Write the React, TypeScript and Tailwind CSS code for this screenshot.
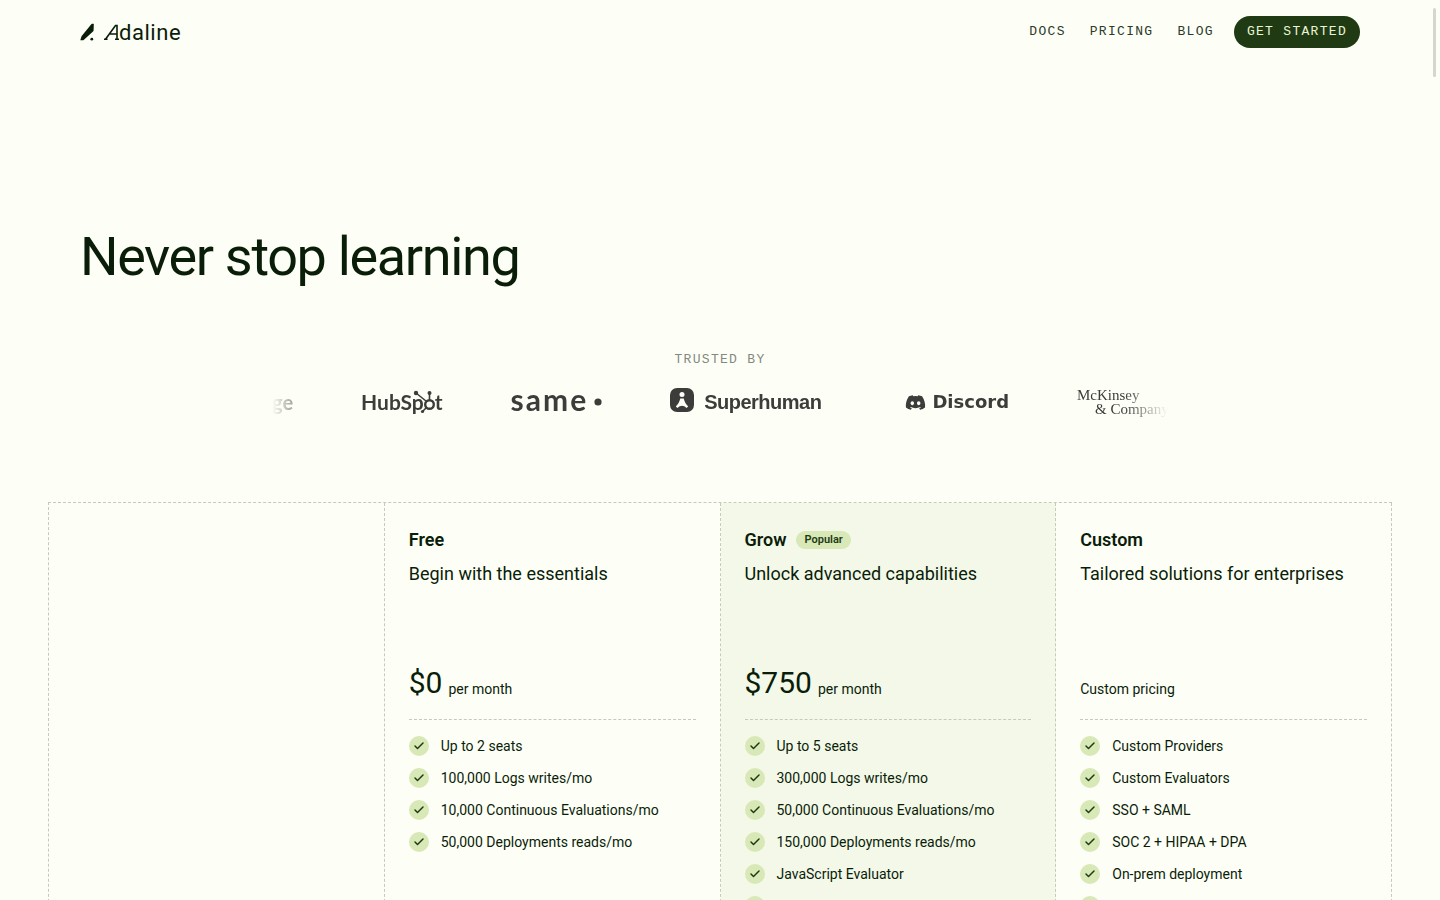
import type { ReactNode } from 'react';
import { Check } from 'lucide-react';
import { FaDiscord } from 'react-icons/fa';

interface Plan {
  name: string;
  tagline: string;
  price?: string;
  priceNote: string;
  popular?: boolean;
  features: string[];
}

const navLinks = ['Docs', 'Pricing', 'Blog'];

const plans: Plan[] = [
  {
    name: 'Free',
    tagline: 'Begin with the essentials',
    price: '$0',
    priceNote: 'per month',
    features: [
      'Up to 2 seats',
      '100,000 Logs writes/mo',
      '10,000 Continuous Evaluations/mo',
      '50,000 Deployments reads/mo',
    ],
  },
  {
    name: 'Grow',
    tagline: 'Unlock advanced capabilities',
    price: '$750',
    priceNote: 'per month',
    popular: true,
    features: [
      'Up to 5 seats',
      '300,000 Logs writes/mo',
      '50,000 Continuous Evaluations/mo',
      '150,000 Deployments reads/mo',
      'JavaScript Evaluator',
      'Slack support',
    ],
  },
  {
    name: 'Custom',
    tagline: 'Tailored solutions for enterprises',
    priceNote: 'Custom pricing',
    features: [
      'Custom Providers',
      'Custom Evaluators',
      'SSO + SAML',
      'SOC 2 + HIPAA + DPA',
      'On-prem deployment',
      'Tailored onboarding',
    ],
  },
];

function AdalineLogo() {
  return (
    <a href="#" className="flex items-center gap-2 text-[#0a1d08]">
      <svg width="16" height="18" viewBox="0 0 16 18" fill="currentColor" aria-hidden="true">
        <path d="M12 .8H13.400Q13.900.8 13.800 1.500L13.600 7.200Q13.600 8 13 8.600L3.400 17.300H.3L1.200 14.200Q1.600 12.900 2.500 11.900L11.300 1.300Q11.600.8 12 .8Z" />
        <circle cx="11.800" cy="16.200" r="1.400" />
      </svg>
      <span className="flex items-center font-['Roboto'] text-[22px] tracking-wide">
        <svg width="15" height="16" viewBox="0 0 15 16" fill="none" stroke="currentColor" strokeWidth="1.600" aria-hidden="true">
          <path d="M0 15.200H3.500M1.500 15.200L11.500 1.500H13V15.200M5.500 10H13M11 15.200H15" />
        </svg>
        daline
      </span>
    </a>
  );
}

function HubSpotLogo() {
  return (
    <span className="flex items-center font-['Lato'] text-[21px] font-bold">
      HubSp
      <svg width="15" height="27" viewBox="0 0 15 27" className="-ml-1 overflow-visible" fill="none" stroke="currentColor" aria-hidden="true">
        <circle cx="9.500" cy="15.500" r="4.300" strokeWidth="2.400" />
        <path d="M9.500 11V5M6 12L-4 4M6.500 18.500L2.500 22.500" strokeWidth="1.600" />
        <g fill="currentColor" stroke="none">
          <circle cx="9.500" cy="4" r="2" />
          <circle cx="-4" cy="4" r="2.200" />
          <circle cx="2.500" cy="22.500" r="1.600" />
        </g>
      </svg>
      t
    </span>
  );
}

function SameLogo() {
  return (
    <span className="flex items-center gap-1.5">
      <span className="pb-1.5 font-['Lato'] text-[30px] leading-[30px] font-bold tracking-[2px]">same</span>
      <svg width="8" height="8" viewBox="0 0 8 8" aria-hidden="true">
        <circle cx="4" cy="4" r="3.600" fill="currentColor" />
      </svg>
    </span>
  );
}

function SuperhumanLogo() {
  return (
    <span className="mr-4 flex items-center gap-2.5 font-['Liberation_Sans'] text-xl font-bold tracking-tight">
      <svg width="24" height="24" viewBox="0 0 24 24" className="mb-1" aria-hidden="true">
        <rect width="24" height="24" rx="7" fill="currentColor" />
        <circle cx="12" cy="6.500" r="2.500" fill="#fdfff7" />
        <path d="M10.300 10.500H13.700C14.500 13.800 16 16.300 18.200 18.500L16.500 20C15 18.500 13.500 17.700 12 17.700S9 18.500 7.500 20L5.800 18.500C8 16.300 9.500 13.800 10.300 10.500Z" fill="#fdfff7" />
      </svg>
      Superhuman
    </span>
  );
}

function DiscordLogo() {
  return (
    <span className="flex items-center gap-1.5 font-['DejaVu_Sans'] text-lg font-bold">
      <FaDiscord className="size-[21px]" />
      Discord
    </span>
  );
}

function McKinseyLogo() {
  return (
    <span className="flex flex-col font-['Liberation_Serif'] text-[15px] leading-[14px]">
      <span>McKinsey</span>
      <span className="pl-[18px] whitespace-nowrap">&amp; Company</span>
    </span>
  );
}

function LogoSlot({ children }: { children: ReactNode }) {
  return <li className="flex h-9 shrink-0 items-center">{children}</li>;
}

function PlanColumn({ plan }: { plan: Plan }) {
  return (
    <section
      className={
        plan.popular
          ? 'border-r border-dashed border-[#c6cabd] bg-[#f3f8e8] px-6 pt-[23px]'
          : 'border-r border-dashed border-[#c6cabd] px-6 pt-[23px]'
      }
    >
      <div className="flex h-7 items-center gap-2.5">
        <h2 className="text-lg font-semibold">{plan.name}</h2>
        {plan.popular && (
          <span className="rounded-full bg-[#d8e8b6] px-2 text-[11px] leading-[18px] font-semibold text-[#203b14]">
            Popular
          </span>
        )}
      </div>
      <p className="mt-1.5 text-lg whitespace-nowrap">{plan.tagline}</p>

      <div className="mt-[77px] mb-[18px] flex h-9 items-end gap-1.5">
        {plan.price && <span className="text-3xl leading-9">{plan.price}</span>}
        <span className="text-sm leading-6">{plan.priceNote}</span>
      </div>

      <ul className="flex flex-col gap-3 border-t border-dashed border-[#c6cabd] py-4">
        {plan.features.map((feature) => (
          <li key={feature} className="flex items-center gap-3 text-sm whitespace-nowrap">
            <span className="flex size-5 shrink-0 items-center justify-center rounded-full bg-[#d8e8b6] text-[#203b14]">
              <Check className="size-3" strokeWidth={3} />
            </span>
            {feature}
          </li>
        ))}
      </ul>
    </section>
  );
}

export default function App() {
  return (
    <div className="h-screen overflow-y-auto bg-[#fdfff7] font-['Roboto',sans-serif] text-[#0a1d08] [scrollbar-width:none]">
      <header className="flex h-16 items-center justify-between px-20">
        <AdalineLogo />
        <nav className="flex items-center gap-5 font-['Liberation_Mono',monospace] text-[13px] tracking-widest uppercase">
          <div className="flex gap-6 text-[#2b3a29]">
            {navLinks.map((link) => (
              <a key={link} href="#">
                {link}
              </a>
            ))}
          </div>
          <button className="h-8 rounded-full bg-[#203b14] px-[13px] tracking-widest text-[#eaf5d5] uppercase">
            Get started
          </button>
        </nav>
      </header>

      <main>
        <h1 className="mt-40 px-20 text-[54px] leading-[66px] tracking-tight">Never stop learning</h1>

        <div className="mt-[61px]">
          <p className="text-center font-['Liberation_Mono',monospace] text-[13px] leading-[18px] tracking-widest text-[#83897f] uppercase">
            Trusted by
          </p>
          <ul className="mx-auto mt-[15px] flex max-w-4xl items-center gap-[68px] overflow-hidden text-[#3c3d3a] [mask-image:linear-gradient(to_right,transparent,black_5%,black_95%,transparent)]">
            <LogoSlot>
              <span className="font-['Lato'] text-xl font-bold">ge</span>
            </LogoSlot>
            <LogoSlot>
              <HubSpotLogo />
            </LogoSlot>
            <LogoSlot>
              <SameLogo />
            </LogoSlot>
            <LogoSlot>
              <SuperhumanLogo />
            </LogoSlot>
            <LogoSlot>
              <DiscordLogo />
            </LogoSlot>
            <LogoSlot>
              <McKinseyLogo />
            </LogoSlot>
          </ul>
        </div>

        <div className="mx-12 mt-[82px] grid grid-cols-4 border-t border-l border-dashed border-[#c6cabd]">
          <div className="border-r border-dashed border-[#c6cabd]" />
          {plans.map((plan) => (
            <PlanColumn key={plan.name} plan={plan} />
          ))}
        </div>
      </main>

      {/* Scroll thumb */}
      <div className="fixed top-2 right-1 h-[69px] w-[3px] rounded-full bg-[#d3d7ce]" />
    </div>
  );
}
